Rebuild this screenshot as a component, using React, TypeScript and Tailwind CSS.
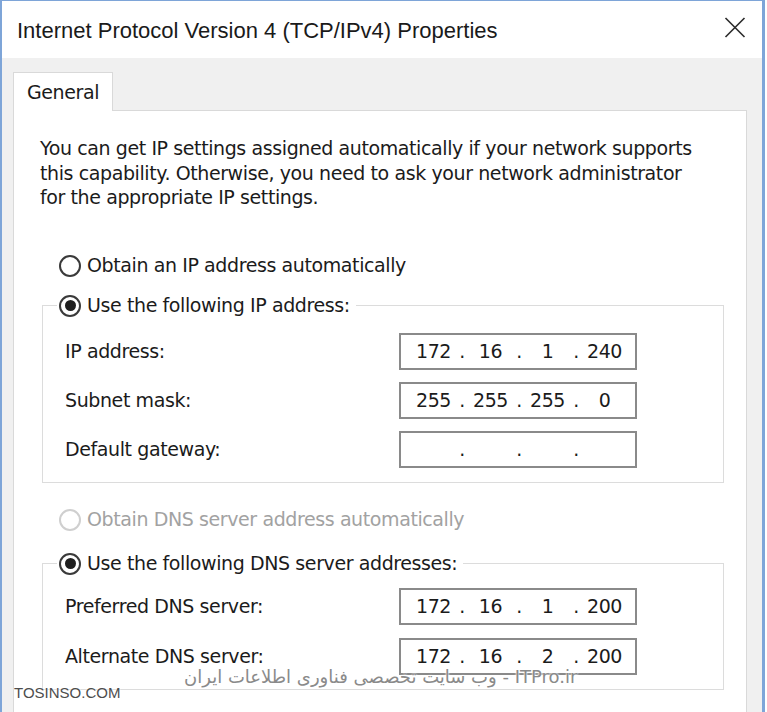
import React from "react";

const body = "font-['DejaVu_Sans',sans-serif] text-[19px] tracking-[-0.4px] text-[#1b1b1b]";

function Radio({ checked, disabled }: { checked?: boolean; disabled?: boolean }) {
  return (
    <span
      className={
        "flex items-center justify-center w-[22px] h-[22px] rounded-full border-2 shrink-0 " +
        (disabled ? "border-[#cfcfcf]" : "border-[#3a3a3a]")
      }
    >
      {checked && <span className="block w-[11px] h-[11px] rounded-full bg-[#1e1e1e]" />}
    </span>
  );
}

function RadioRow({ label, checked, disabled }: { label: string; checked?: boolean; disabled?: boolean }) {
  return (
    <div className="flex items-center h-[26px]">
      <Radio checked={checked} disabled={disabled} />
      <span className={"ml-[6px] whitespace-nowrap " + (disabled ? "text-[#a2a2a2]" : "")}>{label}</span>
    </div>
  );
}

function IpBox({ parts }: { parts: string[] }) {
  return (
    <div className="flex items-center w-[238px] h-[37px] border-2 border-[#8a8a8a] bg-white pl-[8px]">
      {parts.map((p, i) => (
        <React.Fragment key={i}>
          <span className="w-[49px] text-center">{p}</span>
          {i < 3 && <span className="w-[8px] text-center">.</span>}
        </React.Fragment>
      ))}
    </div>
  );
}

function Row({ label, parts }: { label: string; parts: string[] }) {
  return (
    <div className="flex items-center h-[37px] pl-[8px]">
      <span className="w-[334px] shrink-0 whitespace-nowrap">{label}</span>
      <IpBox parts={parts} />
    </div>
  );
}

export default function App() {
  return (
    <div className="w-[767px] h-[712px] bg-white overflow-hidden">
      <div className={"relative w-[765px] h-[712px] border-l-2 border-r-[3px] border-t border-[#7ea5d8] flex flex-col overflow-hidden " + body}>
        {/* Title bar */}
        <div className="h-[57px] shrink-0 bg-white flex items-center justify-between pl-[15px] pr-[16px]">
          <span className="font-['Liberation_Sans',Arial,sans-serif] text-[22px] leading-none tracking-normal text-[#1a1a1a] pt-[3px]">
            Internet Protocol Version 4 (TCP/IPv4) Properties
          </span>
          <svg width="22" height="21" viewBox="0 0 22 21" className="-mt-[4px]">
            <path d="M1.5 1 L20.5 20 M20.5 1 L1.5 20" stroke="#2a2a2a" strokeWidth="1.6" fill="none" />
          </svg>
        </div>

        {/* Body */}
        <div className="flex-1 bg-[#f0f0f0] pl-[11px] pr-[15px] pt-[14px] flex flex-col">
          <div className="relative z-10 -mb-px w-[100px] h-[39px] bg-white border border-b-0 border-[#d9d9d9] flex items-center pl-[13px]">
            General
          </div>
          <div className="h-[640px] shrink-0 bg-white border border-[#d9d9d9] pl-[26px] pt-[25px]">
            <p className="leading-[24.5px] whitespace-nowrap">
              You can get IP settings assigned automatically if your network supports
              <br />
              this capability. Otherwise, you need to ask your network administrator
              <br />
              for the appropriate IP settings.
            </p>

            <div className="mt-[43px] pl-[19px]">
              <RadioRow label="Obtain an IP address automatically" />
            </div>

            <fieldset className="mt-[14px] ml-[2px] w-[682px] border border-[#dcdcdc] px-[14px] pt-[14px] pb-[14px] m-0">
              <legend className="pl-[2px] pr-[6px]">
                <RadioRow label="Use the following IP address:" checked />
              </legend>
              <div className="flex flex-col gap-[12px]">
                <Row label="IP address:" parts={["172", "16", "1", "240"]} />
                <Row label="Subnet mask:" parts={["255", "255", "255", "0"]} />
                <Row label="Default gateway:" parts={["", "", "", ""]} />
              </div>
            </fieldset>

            <div className="mt-[24px] pl-[19px]">
              <RadioRow label="Obtain DNS server address automatically" disabled />
            </div>

            <fieldset className="mt-[18px] ml-[2px] w-[682px] border border-[#dcdcdc] px-[14px] pt-[11px] pb-[14px] m-0">
              <legend className="pl-[2px] pr-[6px]">
                <RadioRow label="Use the following DNS server addresses:" checked />
              </legend>
              <div className="flex flex-col gap-[13px]">
                <Row label="Preferred DNS server:" parts={["172", "16", "1", "200"]} />
                <Row label="Alternate DNS server:" parts={["172", "16", "2", "200"]} />
              </div>
            </fieldset>
          </div>
        </div>

        {/* Watermarks */}
        <div className="absolute left-[12px] top-[684px] font-['Liberation_Sans',Arial,sans-serif] text-[15px] leading-none tracking-normal text-[#4d4d4d] [text-shadow:0_0_2px_#ffffff,0_0_2px_#ffffff]">
          TOSINSO.COM
        </div>
        <div className="absolute left-[182px] top-[667px] font-['DejaVu_Sans',sans-serif] text-[18px] leading-none tracking-normal text-[#8a8a8a] whitespace-nowrap [text-shadow:0_0_2px_#ffffff,0_0_2px_#ffffff]">
          وب سایت تخصصی فناوری اطلاعات ایران - ITPro.ir
        </div>
      </div>
    </div>
  );
}
